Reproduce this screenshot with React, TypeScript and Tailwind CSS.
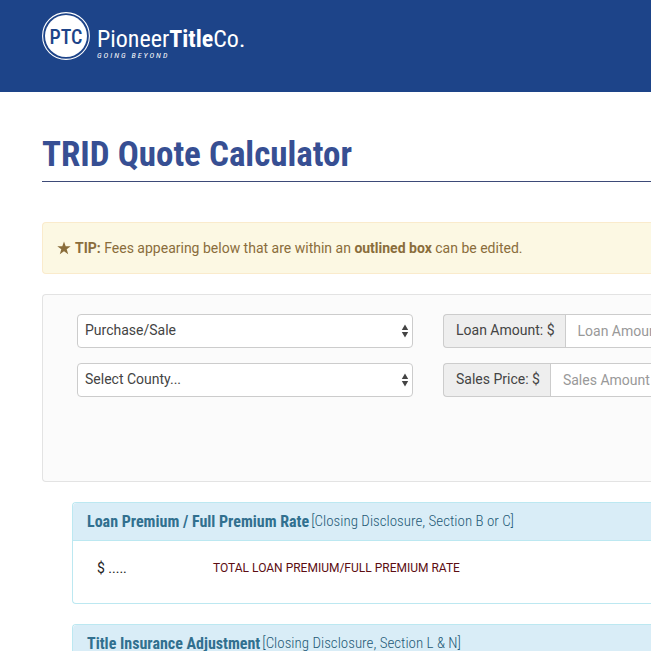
import { useState } from "react";

type AmountFieldProps = {
  id: string;
  label: string;
  placeholder: string;
};

type SelectFieldProps = {
  label: string;
  options: string[];
};

type FeePanelProps = {
  title: string;
  section: string;
  children?: React.ReactNode;
};

function Logo(): React.ReactElement {
  return (
    <a href="#" aria-label="Pioneer Title Co." className="block w-[206px]">
      <svg viewBox="0 0 206 50" className="block h-[50px] w-[206px]" fill="#ffffff">
        <circle cx="24" cy="24" r="23.4" fill="none" stroke="#ffffff" strokeWidth="1.1" />
        <circle cx="24" cy="24" r="21" />
        <text
          x="24"
          y="32"
          textAnchor="middle"
          fill="#1d4489"
          className="font-['Roboto_Condensed',sans-serif] text-[20px] font-medium"
        >
          PTC
        </text>
        <text
          x="55"
          y="35"
          className="font-['Roboto_Condensed',sans-serif] text-[24px]"
        >
          Pioneer<tspan className="font-bold">Title</tspan>Co.
        </text>
        <text
          x="55"
          y="46"
          className="font-['Roboto_Condensed',sans-serif] text-[8px] tracking-[2px] italic"
        >
          GOING BEYOND
        </text>
      </svg>
    </a>
  );
}

function SelectField({ label, options }: SelectFieldProps): React.ReactElement {
  const [value, setValue] = useState(options[0]);

  return (
    <div className="relative">
      <select
        aria-label={label}
        value={value}
        onChange={(event) => setValue(event.target.value)}
        className="block h-[34px] w-full appearance-none rounded border border-[#cccccc] bg-white px-[7px] pb-[2px] text-sm text-[#444444]"
      >
        {options.map((option) => (
          <option key={option}>{option}</option>
        ))}
      </select>
      <svg
        viewBox="0 0 8 14"
        className="pointer-events-none absolute top-[10px] right-1 h-[14px] w-2"
        fill="#444444"
      >
        <path d="M4 0.5 7.2 6H0.8zM4 13.5 0.8 8h6.4z" />
      </svg>
    </div>
  );
}

function AmountField({ id, label, placeholder }: AmountFieldProps): React.ReactElement {
  return (
    <div className="flex h-[34px]">
      <label
        htmlFor={id}
        className="flex shrink-0 items-center rounded-l border border-r-0 border-[#cccccc] bg-[#eeeeee] pr-[10px] pb-[2px] pl-3 text-sm text-[#444444]"
      >
        {label}
      </label>
      <input
        id={id}
        type="text"
        placeholder={placeholder}
        className="min-w-0 flex-1 border border-r-0 border-[#cccccc] bg-white pl-3 text-sm text-[#444444] placeholder:text-[#999999]"
      />
    </div>
  );
}

function FeePanel({ title, section, children }: FeePanelProps): React.ReactElement {
  return (
    <section className="mt-5 ml-[30px] rounded-l border border-r-0 border-[#bce8f1] bg-white">
      <h2 className="flex h-[37px] items-center gap-[2px] rounded-tl bg-[#d9edf7] pl-[14px] font-['Roboto_Condensed',sans-serif] text-base whitespace-nowrap text-[#31708f]">
        <strong>{title}</strong>
        <span className="text-[15px] font-light text-[#245a76]">{section}</span>
      </h2>
      {children}
    </section>
  );
}

export default function App(): React.ReactElement {
  return (
    <div className="min-h-screen bg-white font-['Roboto',sans-serif] text-sm">
      <header className="h-[92px] bg-[#1d4489] pt-3 pl-[42px]">
        <Logo />
      </header>

      <main className="pl-[42px]">
        <h1 className="border-b border-[#3d4a78] pt-[43px] pb-[6px] font-['Roboto_Condensed',sans-serif] text-[35px] leading-10 font-bold text-[#374f93]">
          TRID Quote Calculator
        </h1>

        <p className="mt-10 flex h-[52px] items-center rounded-l border border-r-0 border-[#faebcc] bg-[#fcf8e3] pl-[14px] text-[#8a6d3b]">
          <svg viewBox="0 0 14 14" className="mr-1 h-[14px] w-[14px]" fill="#8a6d3b">
            <path d="M7 0.4 8.7 5.2h5L9.7 8.2l1.5 5L7 10.2l-4.2 3 1.5-5L0.3 5.2h5z" />
          </svg>
          <span>
            <strong>TIP:</strong> Fees appearing below that are within an{" "}
            <strong>outlined box</strong> can be edited.
          </span>
        </p>

        <form className="mt-5 flex h-[188px] gap-[30px] rounded-l border border-r-0 border-[#e3e3e3] bg-[#fbfbfb] pt-[19px] pl-[34px]">
          <div className="flex w-[336px] shrink-0 flex-col gap-[15px]">
            <SelectField label="Transaction type" options={["Purchase/Sale", "Refinance"]} />
            <SelectField label="County" options={["Select County..."]} />
          </div>
          <div className="flex min-w-0 flex-1 flex-col gap-[15px]">
            <AmountField id="loan-amount" label="Loan Amount: $" placeholder="Loan Amount" />
            <AmountField id="sales-price" label="Sales Price: $" placeholder="Sales Amount" />
          </div>
        </form>

        <FeePanel title="Loan Premium / Full Premium Rate" section="[Closing Disclosure, Section B or C]">
          <div className="flex h-[63px] items-center border-t border-[#bce8f1] pb-2 pl-6">
            <output className="w-[116px] text-[#222222]">$ .....</output>
            <span className="text-xs text-[#5c0d12]">TOTAL LOAN PREMIUM/FULL PREMIUM RATE</span>
          </div>
        </FeePanel>
        <FeePanel title="Title Insurance Adjustment" section="[Closing Disclosure, Section L & N]" />
      </main>
    </div>
  );
}
